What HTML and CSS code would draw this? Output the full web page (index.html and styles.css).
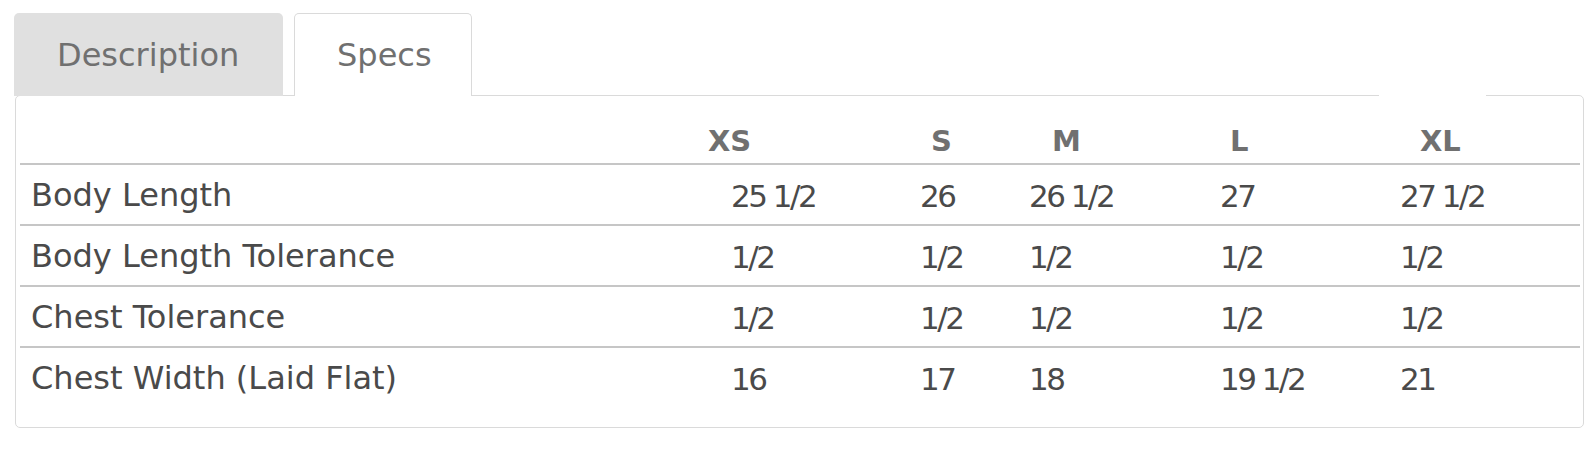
FILE: index.html
```html
<!DOCTYPE html>
<html lang="en">
<head>
<meta charset="utf-8">
<title>Specs</title>
<link rel="stylesheet" href="styles.css">
</head>
<body>
<div class="wrap">
  <ul class="tabs">
    <li class="tab tab-inactive">Description</li>
    <li class="tab tab-active">Specs</li>
    <li class="tab-blank"></li>
  </ul>
  <div class="panel">
    <div class="spec-table">
      <div class="row head-row">
        <div class="cell"></div>
        <div class="cell hcell">XS</div>
        <div class="cell hcell">S</div>
        <div class="cell hcell">M</div>
        <div class="cell hcell">L</div>
        <div class="cell hcell">XL</div>
      </div>
      <div class="row data-row">
        <div class="cell label">Body Length</div>
        <div class="cell val">25 1/2</div>
        <div class="cell val">26</div>
        <div class="cell val">26 1/2</div>
        <div class="cell val">27</div>
        <div class="cell val">27 1/2</div>
      </div>
      <div class="row data-row">
        <div class="cell label">Body Length Tolerance</div>
        <div class="cell val">1/2</div>
        <div class="cell val">1/2</div>
        <div class="cell val">1/2</div>
        <div class="cell val">1/2</div>
        <div class="cell val">1/2</div>
      </div>
      <div class="row data-row">
        <div class="cell label">Chest Tolerance</div>
        <div class="cell val">1/2</div>
        <div class="cell val">1/2</div>
        <div class="cell val">1/2</div>
        <div class="cell val">1/2</div>
        <div class="cell val">1/2</div>
      </div>
      <div class="row data-row">
        <div class="cell label">Chest Width (Laid Flat)</div>
        <div class="cell val">16</div>
        <div class="cell val">17</div>
        <div class="cell val">18</div>
        <div class="cell val">19 1/2</div>
        <div class="cell val">21</div>
      </div>
    </div>
  </div>
</div>
</body>
</html>
```

FILE: styles.css
```css
* { box-sizing: border-box; }

body {
  margin: 0;
  background: #ffffff;
  font-family: "DejaVu Sans", "Liberation Sans", sans-serif;
}

.wrap {
  padding: 13px 4px 0 15px;
}

.tabs {
  list-style: none;
  margin: 0 0 -1px -1px;
  padding: 0;
  display: flex;
  align-items: stretch;
  height: 83px;
  position: relative;
  z-index: 1;
}

.tab {
  height: 83px;
  font-size: 32px;
  line-height: 38px;
  color: #707070;
  border-radius: 5px 5px 0 0;
  white-space: nowrap;
}

.tab-inactive {
  width: 269px;
  background: #e0e0e0;
  padding: 23px 0 0 43px;
}

.tab-active {
  width: 178px;
  margin-left: 11px;
  background: #ffffff;
  border: 1px solid #dadada;
  border-bottom: none;
  padding: 22px 0 0 42px;
}

.tab-blank {
  align-self: flex-end;
  margin-left: auto;
  margin-right: 98px;
  width: 107px;
  height: 6px;
  background: #ffffff;
}

.panel {
  border: 1px solid #dadada;
  border-radius: 5px;
  padding: 4px 3px 20px 4px;
}

.row {
  display: grid;
}

.head-row {
  grid-template-columns: 677px 223px 121px 178px 190px 1fr;
  height: 63px;
}

.data-row {
  grid-template-columns: 700px 189px 109px 191px 180px 1fr;
  height: 61px;
  border-top: 2px solid #c6c6c6;
}

.cell {
  padding-left: 11px;
  white-space: nowrap;
}

.hcell {
  font-size: 29px;
  line-height: 36px;
  font-weight: bold;
  color: #707070;
  padding-top: 23px;
}

.label, .val {
  font-size: 32px;
  line-height: 38px;
  color: #4a4a4a;
  padding-top: 11px;
}

.val {
  font-size: 31px;
  padding-top: 12px;
  letter-spacing: -2.5px;
}
```
